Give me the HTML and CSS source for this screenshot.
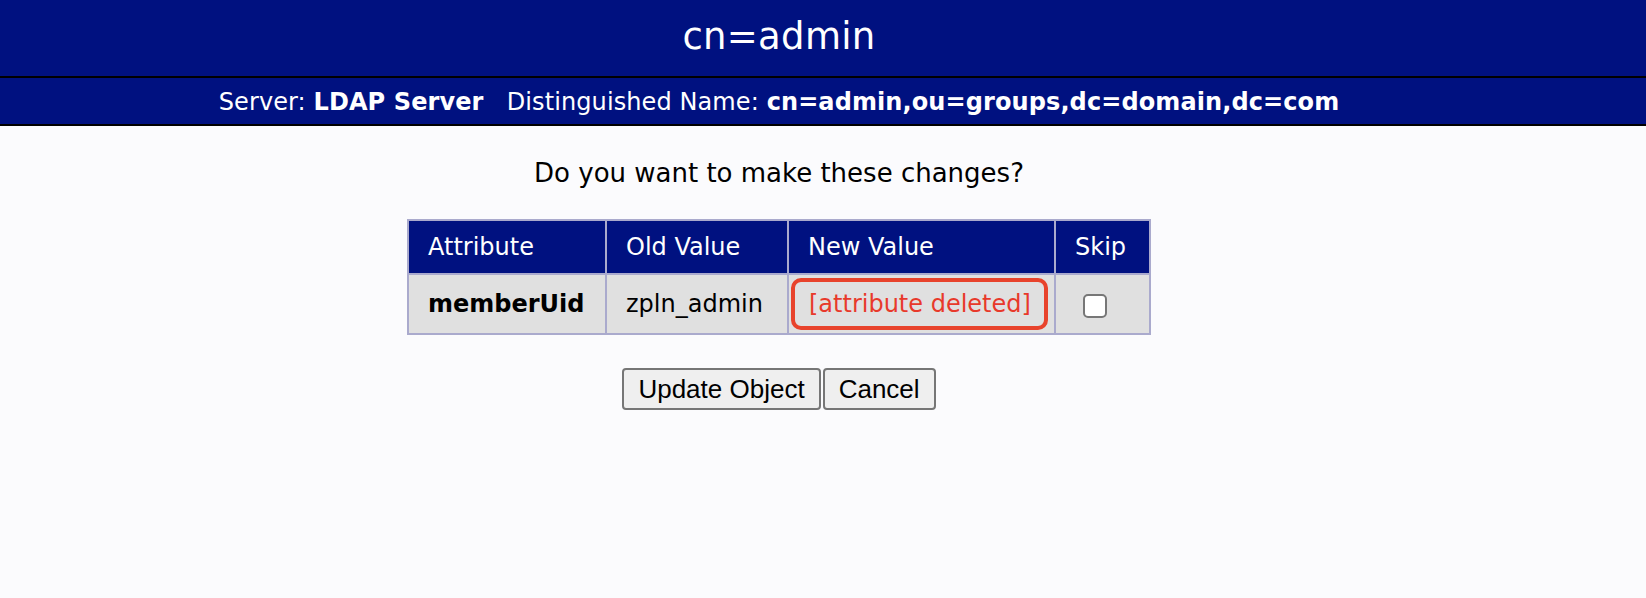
FILE: index.html
```html
<!DOCTYPE html>
<html>
<head>
<meta charset="utf-8">
<title>cn=admin</title>
<link rel="stylesheet" href="styles.css">
</head>
<body>
<div class="title-bar"><div class="inner">cn=admin</div></div>
<div class="sub-bar"><div class="inner">Server: <b>LDAP Server</b>&nbsp;&nbsp; Distinguished Name: <b>cn=admin,ou=groups,dc=domain,dc=com</b></div></div>
<div class="content">
  <p class="question">Do you want to make these changes?</p>
  <table class="changes">
    <thead>
      <tr><th class="c1">Attribute</th><th class="c2">Old Value</th><th class="c3">New Value</th><th class="c4">Skip</th></tr>
    </thead>
    <tbody>
      <tr>
        <td class="attr">memberUid</td>
        <td>zpln_admin</td>
        <td class="newval"><span class="deleted">[attribute deleted]</span></td>
        <td class="skip"><input type="checkbox" class="check"></td>
      </tr>
    </tbody>
  </table>
  <div class="buttons">
    <button class="btn">Update Object</button><button class="btn">Cancel</button>
  </div>
</div>
</body>
</html>
```
FILE: styles.css
```css
html, body {
  margin: 0;
  padding: 0;
  background: #fbfbfd;
  font-family: "DejaVu Sans", Verdana, sans-serif;
  color: #000;
}
.inner {
  width: 1558px;
  text-align: center;
}
.title-bar {
  background: #001180;
  color: #fff;
  height: 76px;
  border-bottom: 2px solid #000;
  display: flex;
  align-items: center;
}
.title-bar .inner {
  font-size: 37px;
  line-height: 44px;
  letter-spacing: 0.3px;
  padding-bottom: 2px;
}
.sub-bar {
  background: #001180;
  color: #fff;
  height: 46px;
  border-bottom: 2px solid #000;
  display: flex;
  align-items: center;
  font-size: 24px;
}
.sub-bar .inner {
  letter-spacing: 0.1px;
  padding-top: 2px;
}
.sub-bar b { font-weight: bold; }
.content {
  width: 1558px;
  display: flex;
  flex-direction: column;
  align-items: center;
}
.question {
  font-size: 26px;
  line-height: 30px;
  margin: 32px 0 0;
}
.changes {
  margin-top: 31px;
  border-collapse: collapse;
  border: 2px solid #aaaacd;
  font-size: 24px;
  width: 744px;
  table-layout: fixed;
}
.changes th, .changes td {
  border: 2px solid #aaaacd;
  text-align: left;
  line-height: 28px;
  white-space: nowrap;
}
.changes th {
  background: #001180;
  color: #fff;
  font-weight: normal;
  padding: 12px 0 12px 19px;
}
.changes td {
  background: #e0e0e0;
  padding: 15px 0 15px 19px;
}
.c1 { width: 177px; }
.c2 { width: 161px; }
.c3 { width: 246px; }
.c4 { width: 74px; }
.changes td.attr { font-weight: bold; }
.changes td.newval { padding: 3px 6px 3px 2px; }
.deleted {
  display: block;
  border: 4px solid #e8432c;
  border-radius: 10px;
  color: #e8392b;
  padding: 8px 14px;
}
.changes td.skip { padding: 16px 0 12px 27px; }
.check {
  appearance: none;
  -webkit-appearance: none;
  margin: 0;
  width: 24px;
  height: 24px;
  border: 2px solid #777;
  border-radius: 5px;
  background: #fff;
  display: block;
}
.buttons {
  margin-top: 33px;
  display: flex;
  gap: 2px;
}
.btn {
  font-family: "Liberation Sans", Arial, sans-serif;
  font-size: 26px;
  line-height: 30px;
  padding: 4px 14px;
  background: #efefef;
  border: 2px solid #767676;
  border-radius: 4px;
  color: #000;
}
```
